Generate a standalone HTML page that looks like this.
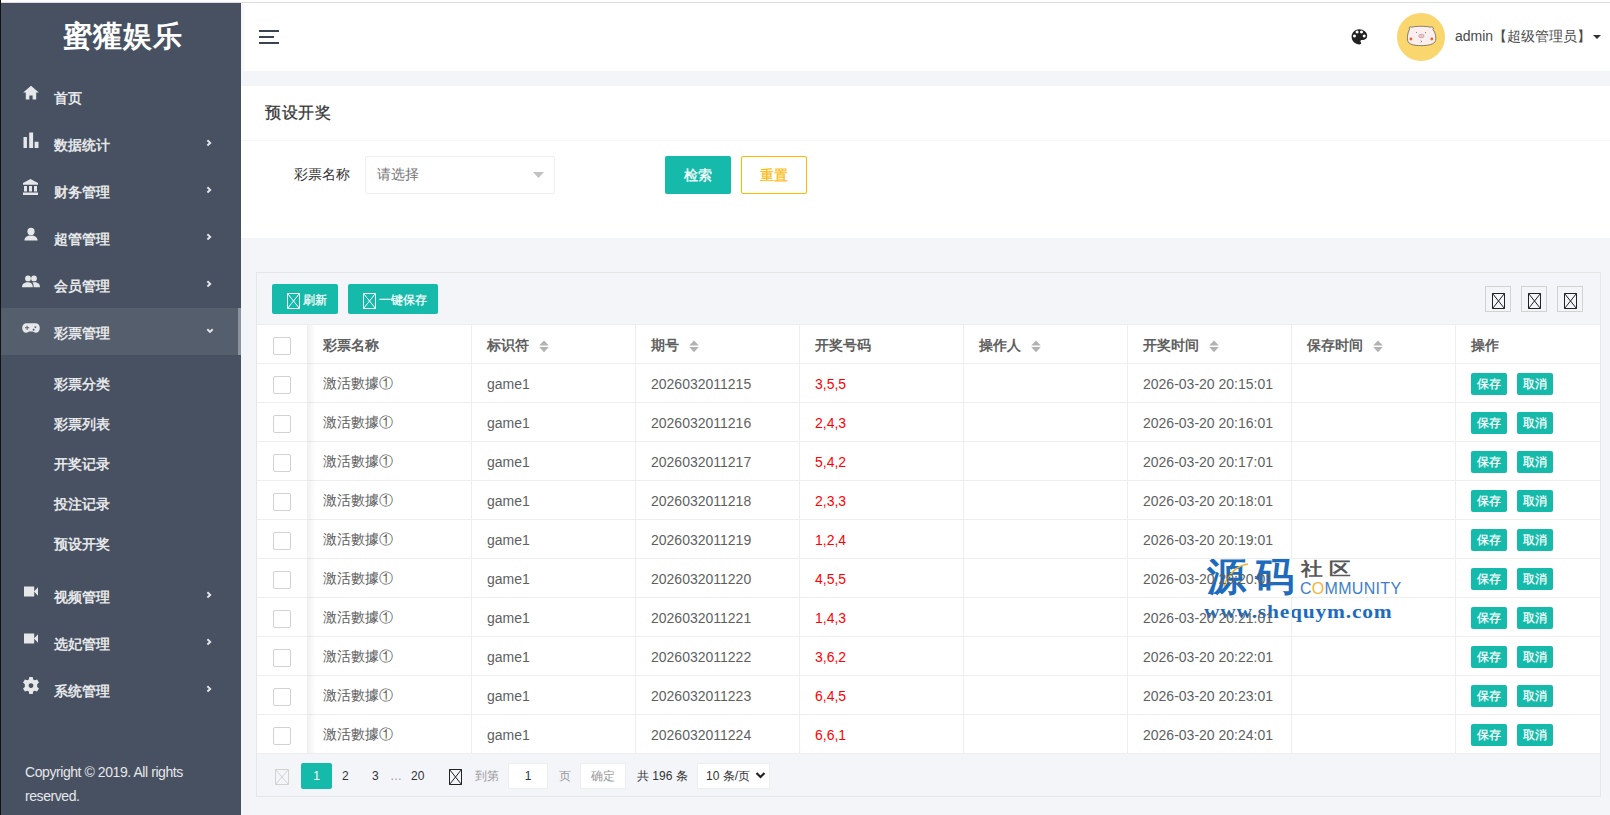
<!DOCTYPE html>
<html><head><meta charset="utf-8"><style>
*{margin:0;padding:0;box-sizing:border-box}
html,body{width:1610px;height:815px;overflow:hidden;background:#fff;font-family:"Liberation Sans",sans-serif;font-size:14px;color:#333}
.a{position:absolute}
svg{display:block}
#topline{left:0;top:2px;width:1610px;height:1px;background:#dcdedc}
#side{left:0;top:3px;width:241px;height:812px;background:#475162;}
#sideedge{left:0;top:0;width:1px;height:815px;background:#141414}
#logo{left:2px;width:241px;top:19px;text-align:center;color:#fff;font-size:29px;line-height:34px;font-weight:bold;letter-spacing:1px}
.mt{color:#e6e7e9;font-weight:bold;font-size:14px;line-height:20px;white-space:nowrap}
.ic{fill:#e6e7e9}
#hdr{left:241px;top:3px;width:1369px;height:68px;background:#fff}
#content{left:241px;top:71px;width:1369px;height:744px;background:#f4f5f9}
.card1{left:241px;top:86px;width:1369px;height:152px;background:#fff}
.tbl{left:256px;top:272px;width:1345px;height:525px;border:1px solid #e6e6e6;background:#f4f5f9}
.cell{color:#5f5f5f;font-size:14px;line-height:20px;white-space:nowrap}
.th{color:#5f5f5f;font-weight:bold;font-size:14px;line-height:20px;white-space:nowrap}
.btn-g{background:#16baaa;color:#fff;border-radius:2px;text-align:center;white-space:nowrap}
.cb{width:18px;height:18px;border:1px solid #d2d2d2;border-radius:2px;background:#fff}
.tofu{stroke:#222;fill:none}
</style></head><body>
<div id="topline" class="a"></div>
<div id="side" class="a"></div>
<div id="sideedge" class="a"></div>
<div id="logo" class="a">蜜獾娱乐</div>
<div class="a" style="left:1px;top:308px;width:240px;height:47px;background:#555e6d"></div>
<div class="a" style="left:238px;top:308px;width:3px;height:47px;background:#8c939e"></div>
<div class="a mt" style="left:54px;top:88px">首页</div>
<div class="a mt" style="left:54px;top:135px">数据统计</div>
<svg class="a" style="left:206px;top:139px" width="6" height="8" viewBox="0 0 6 8"><path d="M1.4 1.3 L4.2 3.9 L1.4 6.5" stroke="#e6e7e9" stroke-width="1.9" fill="none"/></svg>
<div class="a mt" style="left:54px;top:182px">财务管理</div>
<svg class="a" style="left:206px;top:186px" width="6" height="8" viewBox="0 0 6 8"><path d="M1.4 1.3 L4.2 3.9 L1.4 6.5" stroke="#e6e7e9" stroke-width="1.9" fill="none"/></svg>
<div class="a mt" style="left:54px;top:229px">超管管理</div>
<svg class="a" style="left:206px;top:233px" width="6" height="8" viewBox="0 0 6 8"><path d="M1.4 1.3 L4.2 3.9 L1.4 6.5" stroke="#e6e7e9" stroke-width="1.9" fill="none"/></svg>
<div class="a mt" style="left:54px;top:276px">会员管理</div>
<svg class="a" style="left:206px;top:280px" width="6" height="8" viewBox="0 0 6 8"><path d="M1.4 1.3 L4.2 3.9 L1.4 6.5" stroke="#e6e7e9" stroke-width="1.9" fill="none"/></svg>
<div class="a mt" style="left:54px;top:323px">彩票管理</div>
<svg class="a" style="left:206px;top:328px" width="8" height="6" viewBox="0 0 8 6"><path d="M1.3 1.3 L4 3.9 L6.7 1.3" stroke="#e6e7e9" stroke-width="1.9" fill="none"/></svg>
<div class="a mt" style="left:54px;top:587px">视频管理</div>
<svg class="a" style="left:206px;top:591px" width="6" height="8" viewBox="0 0 6 8"><path d="M1.4 1.3 L4.2 3.9 L1.4 6.5" stroke="#e6e7e9" stroke-width="1.9" fill="none"/></svg>
<div class="a mt" style="left:54px;top:634px">选妃管理</div>
<svg class="a" style="left:206px;top:638px" width="6" height="8" viewBox="0 0 6 8"><path d="M1.4 1.3 L4.2 3.9 L1.4 6.5" stroke="#e6e7e9" stroke-width="1.9" fill="none"/></svg>
<div class="a mt" style="left:54px;top:681px">系统管理</div>
<svg class="a" style="left:206px;top:685px" width="6" height="8" viewBox="0 0 6 8"><path d="M1.4 1.3 L4.2 3.9 L1.4 6.5" stroke="#e6e7e9" stroke-width="1.9" fill="none"/></svg>
<div class="a mt" style="left:54px;top:374px">彩票分类</div>
<div class="a mt" style="left:54px;top:414px">彩票列表</div>
<div class="a mt" style="left:54px;top:454px">开奖记录</div>
<div class="a mt" style="left:54px;top:494px">投注记录</div>
<div class="a mt" style="left:54px;top:534px">预设开奖</div>
<div class="a" style="left:25px;top:760px;color:#e6e7e9;font-size:14px;line-height:24px;width:215px;letter-spacing:-0.43px;white-space:nowrap">Copyright © 2019. All rights<br>reserved.</div>
<svg class="a" style="left:23px;top:85px" width="16" height="15" viewBox="0 0 16 15"><path fill="#e6e7e9" d="M8 0.8 L15.8 7.6 L13.2 7.6 L13.2 14.6 L9.6 14.6 L9.6 10.6 L6.4 10.6 L6.4 14.6 L2.8 14.6 L2.8 7.6 L0.2 7.6 Z"/></svg>
<svg class="a" style="left:23px;top:132px" width="16" height="17" viewBox="0 0 16 17"><path fill="#e6e7e9" d="M0.5 5 H3.9 V16 H0.5Z M6.2 0.5 H10.1 V16 H6.2Z M11.6 9.8 H15.5 V16 H11.6Z"/></svg>
<svg class="a" style="left:22px;top:178px" width="17" height="18" viewBox="0 0 17 18"><path fill="#e6e7e9" d="M8.5 1 L16 5 V6.8 H1 V5 Z M2 8 H5 V13.5 H2Z M7 8 H10 V13.5 H7Z M12 8 H15 V13.5 H12Z M1 14.5 H16 V17 H1Z"/></svg>
<svg class="a" style="left:23px;top:227px" width="16" height="15" viewBox="0 0 16 15"><circle fill="#e6e7e9" cx="8" cy="4.4" r="3.6"/><path fill="#e6e7e9" d="M1.4 13.6 C1.4 10.2 4.2 8.4 8 8.4 C11.8 8.4 14.6 10.2 14.6 13.6 Z"/></svg>
<svg class="a" style="left:21px;top:275px" width="20" height="14" viewBox="0 0 20 14"><circle fill="#e6e7e9" cx="7" cy="3.4" r="2.9"/><circle fill="#e6e7e9" cx="13" cy="3.4" r="2.9"/><path fill="#e6e7e9" d="M1 12.3 C1 8.6 3.6 7.2 7 7.2 C9.5 7.2 11.6 8.2 11.9 12.3Z"/><path fill="#e6e7e9" d="M12.8 12.3 C12.7 10 12.2 8.6 11.4 7.6 C12 7.3 12.5 7.2 13.4 7.2 C16.8 7.2 19 8.6 19 12.3Z"/></svg>
<svg class="a" style="left:22px;top:322px" width="18" height="12" viewBox="0 0 18 12"><path fill="#e6e7e9" fill-rule="evenodd" d="M4.6 1.2 H13.4 C16 1.2 17.8 3.2 17.8 6 C17.8 8.8 16 10.8 13.8 10.8 C12.4 10.8 11.6 10 10.6 9.6 H7.4 C6.4 10 5.6 10.8 4.2 10.8 C2 10.8 0.2 8.8 0.2 6 C0.2 3.2 2 1.2 4.6 1.2 Z M3 5.3 H4.6 V3.7 H5.6 V5.3 H7.2 V6.3 H5.6 V7.9 H4.6 V6.3 H3 Z M11.6 6.8 a0.9 0.9 0 1 0 0.01 0 Z M13.4 4.2 a0.9 0.9 0 1 0 0.01 0Z"/></svg>
<svg class="a" style="left:23px;top:586px" width="16" height="11" viewBox="0 0 16 11"><path fill="#e6e7e9" d="M1 0.6 H11.2 V10.4 H1Z M11 5.5 L15 1.2 V9.8Z"/></svg>
<svg class="a" style="left:23px;top:633px" width="16" height="11" viewBox="0 0 16 11"><path fill="#e6e7e9" d="M1 0.6 H11.2 V10.4 H1Z M11 5.5 L15 1.2 V9.8Z"/></svg>
<svg class="a" style="left:23px;top:677px" width="16" height="17" viewBox="-7.4 -7.9 14.8 15.7"><path fill="#e6e7e9" fill-rule="evenodd" d="M-1.6 -7.8 H1.6 L2 -5.6 L3.5 -4.8 L5.6 -5.6 L7.4 -2.8 L5.7 -1.3 V1.3 L7.4 2.8 L5.6 5.6 L3.5 4.8 L2 5.6 L1.6 7.8 H-1.6 L-2 5.6 L-3.5 4.8 L-5.6 5.6 L-7.4 2.8 L-5.7 1.3 V-1.3 L-7.4 -2.8 L-5.6 -5.6 L-3.5 -4.8 L-2 -5.6 Z M0 -2.2 A2.2 2.2 0 1 0 0.01 -2.2 Z"/></svg>
<div id="hdr" class="a"></div>
<div class="a" style="left:241px;top:3px;width:5px;height:68px;background:linear-gradient(to right,rgba(0,0,0,.04),rgba(0,0,0,0))"></div>
<svg class="a" style="left:259px;top:29px" width="21" height="16" viewBox="0 0 21 16"><path fill="#3b4350" d="M0 1 H20 V3 H0Z M0 7 H15 V9 H0Z M0 13 H20 V15 H0Z"/></svg>
<svg class="a" style="left:1351px;top:28px" width="17" height="18" viewBox="0 0 17 18"><path fill="#222" fill-rule="evenodd" d="M8.3 1.2 C12.6 1.2 16.2 4.2 16.2 7.8 C16.2 10.4 14.6 11.9 12.2 11.9 H10.8 C10 11.9 9.4 12.5 9.4 13.3 C9.4 13.7 9.6 14 9.8 14.3 C10 14.6 10.2 14.9 10.2 15.3 C10.2 16 9.6 16.5 8.3 16.5 C4.1 16.5 0.6 13 0.6 8.8 C0.6 4.6 4.1 1.2 8.3 1.2 Z M3.5 6.4 a1.5 1.5 0 1 0 0.01 0Z M6.1 2.6 a1.5 1.5 0 1 0 0.01 0Z M10.5 2.6 a1.5 1.5 0 1 0 0.01 0Z M13.2 6.4 a1.5 1.5 0 1 0 0.01 0Z"/></svg>
<svg class="a" style="left:1397px;top:13px" width="48" height="48" viewBox="0 0 48 48"><circle cx="24" cy="24" r="24" fill="#fad66e"/><path d="M12.6 16.2 C11.6 14.4 13 13.2 14.8 14.2 C19 13 29 13 33.6 14.2 C35.4 13.2 37 14.4 36 16.6 C38.6 19.5 39.2 25 38.6 27.5 C37.5 31.5 31 32.6 24 32.6 C17 32.6 11.5 31.5 10.6 27.5 C10 25 10.6 19.5 12.6 16.2 Z" fill="#fbeeee" stroke="#3a3a3a" stroke-width="0.6"/><ellipse cx="24.4" cy="23" rx="2.8" ry="1.7" fill="#f4c4c4" stroke="#8a6a6a" stroke-width="0.4"/><circle cx="13.9" cy="26" r="1.4" fill="#f0602e"/><circle cx="34.8" cy="26" r="1.4" fill="#f0602e"/><path d="M19.5 19 V20 M28.5 19 V20.2" stroke="#444" stroke-width="0.6"/><path d="M23.8 27.6 C24.6 27.8 24.6 29 24 29.4" stroke="#444" stroke-width="0.6" fill="none"/></svg>
<div class="a" style="left:1455px;top:26px;font-size:14px;line-height:20px;color:#4a4a4a;white-space:nowrap">admin【超级管理员】</div>
<svg class="a" style="left:1592px;top:34px" width="10" height="6" viewBox="0 0 10 6"><path d="M1 1 H9 L5 5Z" fill="#333"/></svg>
<div id="content" class="a"></div>
<div class="a card1"></div>
<div class="a" style="left:265px;top:103px;font-size:16px;letter-spacing:0.5px;line-height:20px;color:#333;-webkit-text-stroke:0.25px #333;white-space:nowrap">预设开奖</div>
<div class="a" style="left:241px;top:140px;width:1369px;height:1px;background:#f6f6f6"></div>
<div class="a" style="left:294px;top:164px;font-size:14px;line-height:20px;color:#333;white-space:nowrap">彩票名称</div>
<div class="a" style="left:365px;top:156px;width:190px;height:38px;border:1px solid #eee;border-radius:2px;background:#fff"></div>
<div class="a" style="left:377px;top:164px;font-size:14px;line-height:20px;color:#757575;white-space:nowrap">请选择</div>
<svg class="a" style="left:532px;top:171px" width="13" height="8" viewBox="0 0 13 8"><path d="M1 1 H12 L6.5 7Z" fill="#c2c2c2"/></svg>
<div class="a btn-g" style="left:665px;top:156px;width:66px;height:38px;line-height:39px;font-size:14px;-webkit-text-stroke:0.3px #fff">检索</div>
<div class="a" style="left:741px;top:156px;width:66px;height:38px;line-height:36px;font-size:14px;border:1px solid #ffb800;color:#ffb800;border-radius:2px;text-align:center;background:#fff;line-height:37px;-webkit-text-stroke:0.2px #ffb800">重置</div>
<div class="a tbl"></div>
<div class="a btn-g" style="left:272px;top:284px;width:66px;height:30px"></div>
<svg class="a" style="left:287px;top:293px;opacity:1" width="13" height="16" viewBox="0 0 13 16"><path d="M0.5 0.5 H12.5 V15.5 H0.5Z M0.5 0.5 L12.5 15.5 M12.5 0.5 L0.5 15.5" stroke="#fff" stroke-width="1" fill="none"/></svg>
<div class="a" style="left:303px;top:291px;color:#fff;font-size:12px;line-height:18px;-webkit-text-stroke:0.25px #fff;white-space:nowrap">刷新</div>
<div class="a btn-g" style="left:348px;top:284px;width:90px;height:30px"></div>
<svg class="a" style="left:363px;top:293px;opacity:1" width="13" height="16" viewBox="0 0 13 16"><path d="M0.5 0.5 H12.5 V15.5 H0.5Z M0.5 0.5 L12.5 15.5 M12.5 0.5 L0.5 15.5" stroke="#fff" stroke-width="1" fill="none"/></svg>
<div class="a" style="left:379px;top:291px;color:#fff;font-size:12px;line-height:18px;-webkit-text-stroke:0.25px #fff;white-space:nowrap">一键保存</div>
<div class="a" style="left:1485px;top:286px;width:26px;height:26px;border:1px solid #d2d2d2"></div>
<svg class="a" style="left:1492px;top:293px;opacity:1" width="13" height="16" viewBox="0 0 13 16"><path d="M0.5 0.5 H12.5 V15.5 H0.5Z M0.5 0.5 L12.5 15.5 M12.5 0.5 L0.5 15.5" stroke="#222" stroke-width="1" fill="none"/></svg>
<div class="a" style="left:1521px;top:286px;width:26px;height:26px;border:1px solid #d2d2d2"></div>
<svg class="a" style="left:1528px;top:293px;opacity:1" width="13" height="16" viewBox="0 0 13 16"><path d="M0.5 0.5 H12.5 V15.5 H0.5Z M0.5 0.5 L12.5 15.5 M12.5 0.5 L0.5 15.5" stroke="#222" stroke-width="1" fill="none"/></svg>
<div class="a" style="left:1557px;top:286px;width:26px;height:26px;border:1px solid #d2d2d2"></div>
<svg class="a" style="left:1564px;top:293px;opacity:1" width="13" height="16" viewBox="0 0 13 16"><path d="M0.5 0.5 H12.5 V15.5 H0.5Z M0.5 0.5 L12.5 15.5 M12.5 0.5 L0.5 15.5" stroke="#222" stroke-width="1" fill="none"/></svg>
<div class="a" style="left:257px;top:324px;width:1343px;height:429px;background:#fff"></div>
<div class="a" style="left:1207px;top:554px;font-size:39px;line-height:46px;font-weight:bold;color:#1c6bbd;white-space:nowrap;letter-spacing:9px">源码</div>
<svg class="a" style="left:1222px;top:562px" width="30" height="26" viewBox="0 0 30 26"><path d="M2 24 C6 12 16 3 26 2" stroke="#f5b335" stroke-width="1.6" fill="none"/></svg>
<div class="a" style="left:1301px;top:558px;font-size:18px;line-height:22px;font-weight:bold;color:#585858;white-space:nowrap;letter-spacing:5px;transform:scaleX(1.2);transform-origin:left">社区</div>
<div class="a" style="left:1300px;top:579px;font-size:16px;line-height:20px;color:#3d7fc9;white-space:nowrap;letter-spacing:0.3px;transform:scaleX(1.0);transform-origin:left">C<span style="color:#f5b335">O</span>MMUNITY</div>
<div class="a" style="left:1204px;top:600px;font-family:'Liberation Serif',serif;font-size:19px;line-height:24px;font-weight:bold;color:#1c6bbd;white-space:nowrap;letter-spacing:0.7px;transform:scaleX(1.13);transform-origin:left">www.shequym.com</div>
<div class="a" style="left:257px;top:324px;width:1343px;height:1px;background:#eee"></div>
<div class="a" style="left:257px;top:363px;width:1343px;height:1px;background:#eee"></div>
<div class="a" style="left:257px;top:402px;width:1343px;height:1px;background:#eee"></div>
<div class="a" style="left:257px;top:441px;width:1343px;height:1px;background:#eee"></div>
<div class="a" style="left:257px;top:480px;width:1343px;height:1px;background:#eee"></div>
<div class="a" style="left:257px;top:519px;width:1343px;height:1px;background:#eee"></div>
<div class="a" style="left:257px;top:558px;width:1343px;height:1px;background:#eee"></div>
<div class="a" style="left:257px;top:597px;width:1343px;height:1px;background:#eee"></div>
<div class="a" style="left:257px;top:636px;width:1343px;height:1px;background:#eee"></div>
<div class="a" style="left:257px;top:675px;width:1343px;height:1px;background:#eee"></div>
<div class="a" style="left:257px;top:714px;width:1343px;height:1px;background:#eee"></div>
<div class="a" style="left:257px;top:753px;width:1343px;height:1px;background:#eee"></div>
<div class="a" style="left:307px;top:324px;width:1px;height:429px;background:#eee"></div>
<div class="a" style="left:471px;top:324px;width:1px;height:429px;background:#eee"></div>
<div class="a" style="left:635px;top:324px;width:1px;height:429px;background:#eee"></div>
<div class="a" style="left:799px;top:324px;width:1px;height:429px;background:#eee"></div>
<div class="a" style="left:963px;top:324px;width:1px;height:429px;background:#eee"></div>
<div class="a" style="left:1127px;top:324px;width:1px;height:429px;background:#eee"></div>
<div class="a" style="left:1291px;top:324px;width:1px;height:235px;background:#eee"></div>
<div class="a" style="left:1291px;top:597px;width:1px;height:156px;background:#eee"></div>
<div class="a" style="left:1455px;top:324px;width:1px;height:429px;background:#eee"></div>
<div class="a" style="left:308px;top:325px;width:8px;height:428px;background:linear-gradient(to right,rgba(0,0,0,.05),rgba(0,0,0,0))"></div>
<div class="a th" style="left:323px;top:335px">彩票名称</div>
<div class="a th" style="left:487px;top:335px">标识符</div>
<svg class="a" style="left:539px;top:340px" width="11" height="13" viewBox="0 0 11 13"><path d="M0.2 5.6 L5 0.4 L9.8 5.6Z M0.2 7 H9.8 L5 12.2Z" fill="#b2b2b2"/></svg>
<div class="a th" style="left:651px;top:335px">期号</div>
<svg class="a" style="left:689px;top:340px" width="11" height="13" viewBox="0 0 11 13"><path d="M0.2 5.6 L5 0.4 L9.8 5.6Z M0.2 7 H9.8 L5 12.2Z" fill="#b2b2b2"/></svg>
<div class="a th" style="left:815px;top:335px">开奖号码</div>
<div class="a th" style="left:979px;top:335px">操作人</div>
<svg class="a" style="left:1031px;top:340px" width="11" height="13" viewBox="0 0 11 13"><path d="M0.2 5.6 L5 0.4 L9.8 5.6Z M0.2 7 H9.8 L5 12.2Z" fill="#b2b2b2"/></svg>
<div class="a th" style="left:1143px;top:335px">开奖时间</div>
<svg class="a" style="left:1209px;top:340px" width="11" height="13" viewBox="0 0 11 13"><path d="M0.2 5.6 L5 0.4 L9.8 5.6Z M0.2 7 H9.8 L5 12.2Z" fill="#b2b2b2"/></svg>
<div class="a th" style="left:1307px;top:335px">保存时间</div>
<svg class="a" style="left:1373px;top:340px" width="11" height="13" viewBox="0 0 11 13"><path d="M0.2 5.6 L5 0.4 L9.8 5.6Z M0.2 7 H9.8 L5 12.2Z" fill="#b2b2b2"/></svg>
<div class="a th" style="left:1471px;top:335px">操作</div>
<div class="a cb" style="left:273px;top:337px"></div>
<div class="a cb" style="left:273px;top:376px"></div>
<div class="a cell" style="left:323px;top:373px">激活數據①</div>
<div class="a cell" style="left:487px;top:374px">game1</div>
<div class="a cell" style="left:651px;top:374px">2026032011215</div>
<div class="a cell" style="left:815px;top:374px;color:#f00">3,5,5</div>
<div class="a cell" style="left:1143px;top:374px">2026-03-20 20:15:01</div>
<div class="a btn-g" style="left:1471px;top:373px;width:36px;height:22px;line-height:22px;font-size:12px;-webkit-text-stroke:0.25px #fff">保存</div>
<div class="a btn-g" style="left:1517px;top:373px;width:36px;height:22px;line-height:22px;font-size:12px;-webkit-text-stroke:0.25px #fff">取消</div>
<div class="a cb" style="left:273px;top:415px"></div>
<div class="a cell" style="left:323px;top:412px">激活數據①</div>
<div class="a cell" style="left:487px;top:413px">game1</div>
<div class="a cell" style="left:651px;top:413px">2026032011216</div>
<div class="a cell" style="left:815px;top:413px;color:#f00">2,4,3</div>
<div class="a cell" style="left:1143px;top:413px">2026-03-20 20:16:01</div>
<div class="a btn-g" style="left:1471px;top:412px;width:36px;height:22px;line-height:22px;font-size:12px;-webkit-text-stroke:0.25px #fff">保存</div>
<div class="a btn-g" style="left:1517px;top:412px;width:36px;height:22px;line-height:22px;font-size:12px;-webkit-text-stroke:0.25px #fff">取消</div>
<div class="a cb" style="left:273px;top:454px"></div>
<div class="a cell" style="left:323px;top:451px">激活數據①</div>
<div class="a cell" style="left:487px;top:452px">game1</div>
<div class="a cell" style="left:651px;top:452px">2026032011217</div>
<div class="a cell" style="left:815px;top:452px;color:#f00">5,4,2</div>
<div class="a cell" style="left:1143px;top:452px">2026-03-20 20:17:01</div>
<div class="a btn-g" style="left:1471px;top:451px;width:36px;height:22px;line-height:22px;font-size:12px;-webkit-text-stroke:0.25px #fff">保存</div>
<div class="a btn-g" style="left:1517px;top:451px;width:36px;height:22px;line-height:22px;font-size:12px;-webkit-text-stroke:0.25px #fff">取消</div>
<div class="a cb" style="left:273px;top:493px"></div>
<div class="a cell" style="left:323px;top:490px">激活數據①</div>
<div class="a cell" style="left:487px;top:491px">game1</div>
<div class="a cell" style="left:651px;top:491px">2026032011218</div>
<div class="a cell" style="left:815px;top:491px;color:#f00">2,3,3</div>
<div class="a cell" style="left:1143px;top:491px">2026-03-20 20:18:01</div>
<div class="a btn-g" style="left:1471px;top:490px;width:36px;height:22px;line-height:22px;font-size:12px;-webkit-text-stroke:0.25px #fff">保存</div>
<div class="a btn-g" style="left:1517px;top:490px;width:36px;height:22px;line-height:22px;font-size:12px;-webkit-text-stroke:0.25px #fff">取消</div>
<div class="a cb" style="left:273px;top:532px"></div>
<div class="a cell" style="left:323px;top:529px">激活數據①</div>
<div class="a cell" style="left:487px;top:530px">game1</div>
<div class="a cell" style="left:651px;top:530px">2026032011219</div>
<div class="a cell" style="left:815px;top:530px;color:#f00">1,2,4</div>
<div class="a cell" style="left:1143px;top:530px">2026-03-20 20:19:01</div>
<div class="a btn-g" style="left:1471px;top:529px;width:36px;height:22px;line-height:22px;font-size:12px;-webkit-text-stroke:0.25px #fff">保存</div>
<div class="a btn-g" style="left:1517px;top:529px;width:36px;height:22px;line-height:22px;font-size:12px;-webkit-text-stroke:0.25px #fff">取消</div>
<div class="a cb" style="left:273px;top:571px"></div>
<div class="a cell" style="left:323px;top:568px">激活數據①</div>
<div class="a cell" style="left:487px;top:569px">game1</div>
<div class="a cell" style="left:651px;top:569px">2026032011220</div>
<div class="a cell" style="left:815px;top:569px;color:#f00">4,5,5</div>
<div class="a cell" style="left:1143px;top:569px">2026-03-20 20:20:01</div>
<div class="a btn-g" style="left:1471px;top:568px;width:36px;height:22px;line-height:22px;font-size:12px;-webkit-text-stroke:0.25px #fff">保存</div>
<div class="a btn-g" style="left:1517px;top:568px;width:36px;height:22px;line-height:22px;font-size:12px;-webkit-text-stroke:0.25px #fff">取消</div>
<div class="a cb" style="left:273px;top:610px"></div>
<div class="a cell" style="left:323px;top:607px">激活數據①</div>
<div class="a cell" style="left:487px;top:608px">game1</div>
<div class="a cell" style="left:651px;top:608px">2026032011221</div>
<div class="a cell" style="left:815px;top:608px;color:#f00">1,4,3</div>
<div class="a cell" style="left:1143px;top:608px">2026-03-20 20:21:01</div>
<div class="a btn-g" style="left:1471px;top:607px;width:36px;height:22px;line-height:22px;font-size:12px;-webkit-text-stroke:0.25px #fff">保存</div>
<div class="a btn-g" style="left:1517px;top:607px;width:36px;height:22px;line-height:22px;font-size:12px;-webkit-text-stroke:0.25px #fff">取消</div>
<div class="a cb" style="left:273px;top:649px"></div>
<div class="a cell" style="left:323px;top:646px">激活數據①</div>
<div class="a cell" style="left:487px;top:647px">game1</div>
<div class="a cell" style="left:651px;top:647px">2026032011222</div>
<div class="a cell" style="left:815px;top:647px;color:#f00">3,6,2</div>
<div class="a cell" style="left:1143px;top:647px">2026-03-20 20:22:01</div>
<div class="a btn-g" style="left:1471px;top:646px;width:36px;height:22px;line-height:22px;font-size:12px;-webkit-text-stroke:0.25px #fff">保存</div>
<div class="a btn-g" style="left:1517px;top:646px;width:36px;height:22px;line-height:22px;font-size:12px;-webkit-text-stroke:0.25px #fff">取消</div>
<div class="a cb" style="left:273px;top:688px"></div>
<div class="a cell" style="left:323px;top:685px">激活數據①</div>
<div class="a cell" style="left:487px;top:686px">game1</div>
<div class="a cell" style="left:651px;top:686px">2026032011223</div>
<div class="a cell" style="left:815px;top:686px;color:#f00">6,4,5</div>
<div class="a cell" style="left:1143px;top:686px">2026-03-20 20:23:01</div>
<div class="a btn-g" style="left:1471px;top:685px;width:36px;height:22px;line-height:22px;font-size:12px;-webkit-text-stroke:0.25px #fff">保存</div>
<div class="a btn-g" style="left:1517px;top:685px;width:36px;height:22px;line-height:22px;font-size:12px;-webkit-text-stroke:0.25px #fff">取消</div>
<div class="a cb" style="left:273px;top:727px"></div>
<div class="a cell" style="left:323px;top:724px">激活數據①</div>
<div class="a cell" style="left:487px;top:725px">game1</div>
<div class="a cell" style="left:651px;top:725px">2026032011224</div>
<div class="a cell" style="left:815px;top:725px;color:#f00">6,6,1</div>
<div class="a cell" style="left:1143px;top:725px">2026-03-20 20:24:01</div>
<div class="a btn-g" style="left:1471px;top:724px;width:36px;height:22px;line-height:22px;font-size:12px;-webkit-text-stroke:0.25px #fff">保存</div>
<div class="a btn-g" style="left:1517px;top:724px;width:36px;height:22px;line-height:22px;font-size:12px;-webkit-text-stroke:0.25px #fff">取消</div>
<svg class="a" style="left:275px;top:769px;opacity:1" width="14" height="16" viewBox="0 0 14 16"><path d="M0.5 0.5 H13.5 V15.5 H0.5Z M0.5 0.5 L13.5 15.5 M13.5 0.5 L0.5 15.5" stroke="#d2d2d2" stroke-width="1" fill="none"/></svg>
<div class="a" style="left:301px;top:763px;width:31px;height:26px;background:#16baaa;border-radius:2px;color:#fff;text-align:center;line-height:26px;font-size:12px">1</div>
<div class="a" style="left:342px;top:766px;font-size:12px;line-height:20px;color:#333">2</div>
<div class="a" style="left:372px;top:766px;font-size:12px;line-height:20px;color:#333">3</div>
<div class="a" style="left:390px;top:766px;font-size:12px;line-height:20px;color:#999">…</div>
<div class="a" style="left:411px;top:766px;font-size:12px;line-height:20px;color:#333">20</div>
<svg class="a" style="left:449px;top:769px;opacity:1" width="13" height="16" viewBox="0 0 13 16"><path d="M0.5 0.5 H12.5 V15.5 H0.5Z M0.5 0.5 L12.5 15.5 M12.5 0.5 L0.5 15.5" stroke="#222" stroke-width="1" fill="none"/></svg>
<div class="a" style="left:475px;top:766px;font-size:12px;line-height:20px;color:#999;white-space:nowrap">到第</div>
<div class="a" style="left:508px;top:763px;width:40px;height:26px;background:#fff;border:1px solid #eee;text-align:center;line-height:24px;font-size:12px;color:#333">1</div>
<div class="a" style="left:559px;top:766px;font-size:12px;line-height:20px;color:#999">页</div>
<div class="a" style="left:580px;top:763px;width:46px;height:26px;background:#fff;border:1px solid #eee;text-align:center;line-height:24px;font-size:12px;color:#999">确定</div>
<div class="a" style="left:637px;top:766px;font-size:12px;line-height:20px;color:#333;white-space:nowrap">共 196 条</div>
<div class="a" style="left:697px;top:763px;width:73px;height:26px;background:#fff;border:1px solid #eee;line-height:24px;font-size:12px;color:#333;padding-left:8px;white-space:nowrap">10 条/页</div>
<svg class="a" style="left:755px;top:771px" width="11" height="9" viewBox="0 0 11 9"><path d="M1.5 2 L5.5 6 L9.5 2" stroke="#222" stroke-width="2.2" fill="none"/></svg>
</body></html>
